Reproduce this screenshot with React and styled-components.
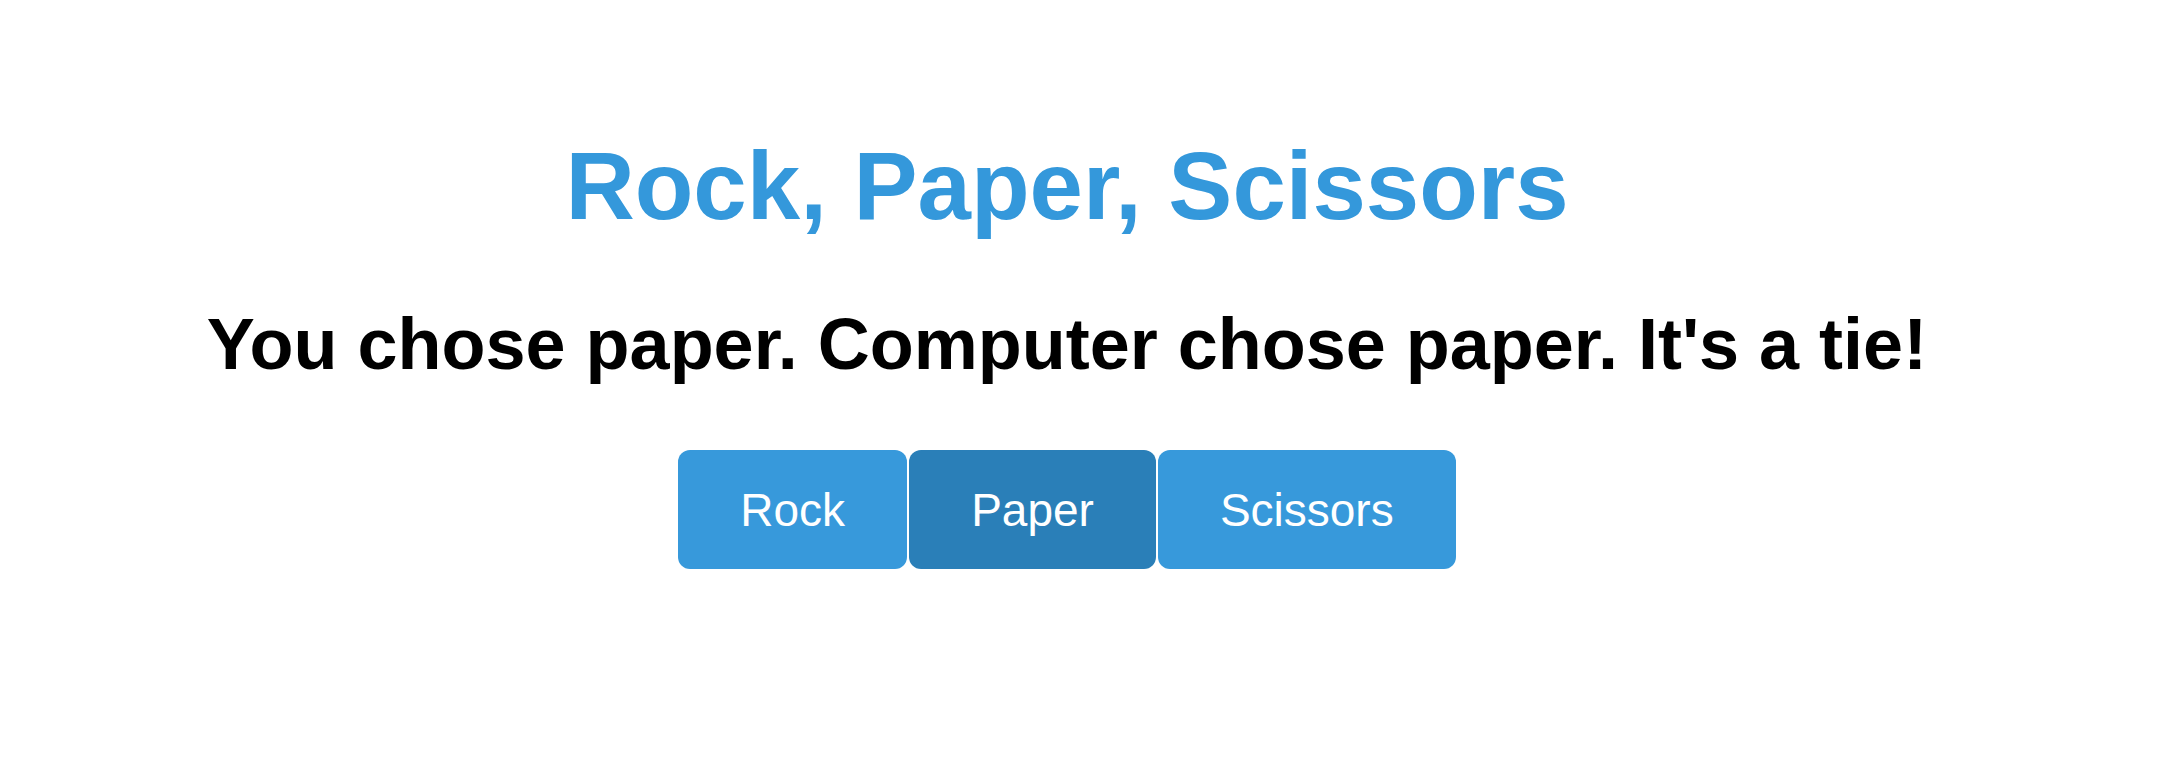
import React, { useState } from 'react';
import styled, { createGlobalStyle } from 'styled-components';

const GlobalStyle = createGlobalStyle`
  html, body {
    margin: 0;
    padding: 0;
    background: #ffffff;
  }
  body {
    font-family: "Liberation Sans", Arial, sans-serif;
  }
`;

const Page = styled.div`
  display: flex;
  flex-direction: column;
  align-items: center;
  padding: 132px 35px 0 0;
  text-align: center;
`;

const Title = styled.h1`
  margin: 0;
  font-size: 96px;
  font-weight: 700;
  line-height: 107px;
  color: #3498db;
`;

const Result = styled.h2`
  margin: 65px 0 0;
  font-size: 72px;
  font-weight: 700;
  line-height: 81px;
  color: #000000;
`;

const Choices = styled.div`
  display: flex;
  gap: 2px;
  margin-top: 65px;
`;

const ChoiceButton = styled.button`
  height: 119px;
  padding: 0 62px;
  border: none;
  border-radius: 12px;
  font-family: "Liberation Sans", Arial, sans-serif;
  font-size: 46px;
  color: #ffffff;
  background: ${p => (p.$active ? '#2a7fb8' : '#3799db')};
  cursor: pointer;
`;

const choices = ['rock', 'paper', 'scissors'];
const labels = { rock: 'Rock', paper: 'Paper', scissors: 'Scissors' };

export default function App() {
  const [player, setPlayer] = useState('paper');
  const [computer, setComputer] = useState('paper');

  const verdict = () => {
    if (player === computer) return "It's a tie!";
    const wins =
      (player === 'rock' && computer === 'scissors') ||
      (player === 'paper' && computer === 'rock') ||
      (player === 'scissors' && computer === 'paper');
    return wins ? 'You win!' : 'You lose!';
  };

  const play = choice => {
    setPlayer(choice);
    setComputer(choices[Math.floor(Math.random() * 3)]);
  };

  return (
    <>
      <GlobalStyle />
      <Page>
        <Title>Rock, Paper, Scissors</Title>
        <Result>
          You chose {player}. Computer chose {computer}. {verdict()}
        </Result>
        <Choices>
          {choices.map(c => (
            <ChoiceButton key={c} $active={c === player} onClick={() => play(c)}>
              {labels[c]}
            </ChoiceButton>
          ))}
        </Choices>
      </Page>
    </>
  );
}
